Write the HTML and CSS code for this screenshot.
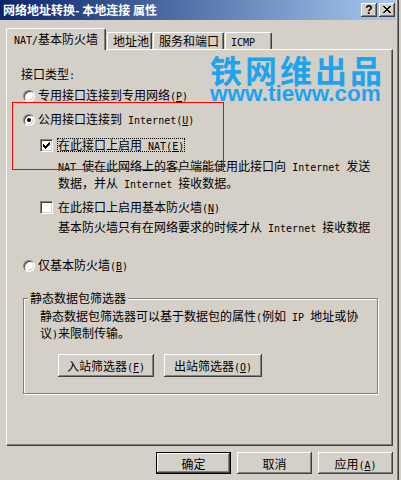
FILE: index.html
```html
<!DOCTYPE html>
<html lang="zh-CN">

<head>
    <meta charset="UTF-8">
    <meta name="viewport" content="width=device-width, initial-scale=1.0">
    <title>网络地址转换- 本地连接 属性</title>
    <link rel="stylesheet" href="styles.css">
</head>

<body>
    <div class="dlg">
        <div class="dlg__title">
            <span class="dlg__caption">网络地址转换- 本地连接 属性</span>
            <div class="dlg__sysbtns">
                <span class="sysbtn sysbtn--help">?</span>
                <span class="sysbtn">
                    <svg width="16" height="14" viewBox="0 0 16 14">
                        <path d="M4 3h2v1h-2z M10 3h2v1h-2z M5 4h2v1h-2z M9 4h2v1h-2z M6 5h2v1h-2z M8 5h2v1h-2z M7 6h2v1h-2z M8 7h2v1h-2z M6 7h2v1h-2z M9 8h2v1h-2z M5 8h2v1h-2z M10 9h2v1h-2z M4 9h2v1h-2z" fill="#000" />
                    </svg>
                </span>
            </div>
        </div>

        <div class="dlg__body">
            <div class="tabs">
                <div class="tab tab--active tab--nat"><span class="en">NAT/</span>基本防火墙</div>
                <div class="tab tab--pool">地址池</div>
                <div class="tab tab--svc">服务和端口</div>
                <div class="tab tab--icmp"><span class="en">ICMP</span></div>
            </div>

            <div class="panel">
                <div class="field-label">接口类型<span class="en">:</span></div>

                <div class="opt opt--private">
                    <span class="radio"></span>
                    <span>专用接口连接到专用网络<span class="en">(<u>P</u>)</span></span>
                </div>
                <div class="opt opt--public">
                    <span class="radio radio--on"></span>
                    <span>公用接口连接到<span class="en"> Internet(<u>U</u>)</span></span>
                </div>
                <div class="opt opt--sub opt--nat">
                    <span class="check">
                        <svg width="11" height="11" viewBox="0 0 11 11">
                            <path d="M8 2h1v1h-1z M7 3h2v1h-2z M2 4h1v1h-1z M6 4h3v1h-3z M2 5h2v1h-2z M5 5h3v1h-3z M2 6h5v1h-5z M3 7h3v1h-3z M4 8h1v1h-1z" fill="#000" />
                        </svg>
                    </span>
                    <span class="focus">在此接口上启用<span class="en"> NAT(<u>E</u>)</span></span>
                </div>
                <div class="hint hint--nat">
                    <span class="en">NAT </span>使在此网络上的客户端能使用此接口向<span class="en"> Internet </span>发送<br>
                    数据，并从<span class="en"> Internet </span>接收数据。
                </div>
                <div class="opt opt--sub opt--fw">
                    <span class="check"></span>
                    <span class="focus focus--off">在此接口上启用基本防火墙<span class="en">(<u>N</u>)</span></span>
                </div>
                <div class="hint hint--fw">
                    基本防火墙只有在网络要求的时候才从<span class="en"> Internet </span>接收数据
                </div>

                <div class="opt opt--basic">
                    <span class="radio"></span>
                    <span>仅基本防火墙<span class="en">(<u>B</u>)</span></span>
                </div>

                <div class="group">
                    <span class="group__legend">静态数据包筛选器</span>
                    <div class="group__text">
                        静态数据包筛选器可以基于数据包的属性<span class="en">(</span>例如<span class="en"> IP </span>地址或协<br>
                        议<span class="en">)</span>来限制传输。
                    </div>
                    <div class="group__btns">
                        <button class="btn btn--in">入站筛选器<span class="en">(<u>F</u>)</span></button>
                        <button class="btn btn--out">出站筛选器<span class="en">(<u>O</u>)</span></button>
                    </div>
                </div>
            </div>

            <div class="dlg__actions">
                <button class="btn btn--dlg btn--default">确定</button>
                <button class="btn btn--dlg">取消</button>
                <button class="btn btn--dlg">应用<span class="en">(<u>A</u>)</span></button>
            </div>
        </div>

        <div class="mark">
            <div class="mark__cn">铁网维出品</div>
            <div class="mark__en">www.tieww.com</div>
        </div>
        <div class="redbox"></div>
    </div>
</body>

</html>
```

FILE: styles.css
```css
* {
    box-sizing: border-box;
    margin: 0;
    padding: 0;
}

body {
    width: 401px;
    height: 480px;
    overflow: hidden;
    background-color: #d4d0c8;
    font: 12px "Noto Sans CJK SC", "DejaVu Sans", sans-serif;
    color: #000;
}

.en {
    font-family: "DejaVu Sans Mono", monospace;
    font-size: 10px;
}

/* window frame */
.dlg {
    position: relative;
    width: 399px;
    height: 480px;
    padding-right: 2px;
    border-right: 1px solid #404040;
    box-shadow: inset -1px 0 #808080;
}

.dlg__title {
    display: flex;
    align-items: center;
    justify-content: space-between;
    height: 20px;
    padding: 0 1px 0 3px;
    background: linear-gradient(to right, #0a246a, #a6caf0);
}

.dlg__caption {
    color: #fff;
    font-weight: bold;
    line-height: 20px;
    white-space: pre;
}

.dlg__sysbtns {
    display: flex;
    gap: 2px;
}

.sysbtn {
    display: flex;
    align-items: center;
    justify-content: center;
    width: 16px;
    height: 14px;
    background-color: #d4d0c8;
    box-shadow: inset -1px -1px #404040, inset 1px 1px #fff, inset -2px -2px #808080;
}

.sysbtn--help {
    font: bold 12px/14px "Liberation Sans", sans-serif;
}

.sysbtn svg {
    display: block;
}

.dlg__body {
    width: 393px;
    padding-left: 6px;
}

/* tabs */
.tabs {
    display: flex;
    align-items: flex-end;
    margin-top: 8px;
}

.tab {
    position: relative;
    height: 17px;
    margin-left: 1px;
    padding-left: 5px;
    line-height: 15px;
    white-space: nowrap;
    background-color: #d4d0c8;
    border-top: 1px solid #fff;
    border-left: 1px solid #fff;
    border-right: 1px solid #404040;
    border-radius: 2px 2px 0 0;
    box-shadow: inset -1px 0 #808080;
}

.tab--active {
    z-index: 1;
    height: 22px;
    margin: 0 0 -1px;
    padding: 2px 0 0 7px;
}

.tab--nat {
    width: 100px;
}

.tab--pool {
    width: 45px;
}

.tab--svc {
    width: 71px;
}

.tab--icmp {
    width: 47px;
}

/* page */
.panel {
    height: 397px;
    padding-left: 14px;
    border-top: 1px solid #fff;
    border-left: 1px solid #fff;
    border-right: 1px solid #404040;
    border-bottom: 1px solid #404040;
    box-shadow: inset -1px -1px #808080;
}

.field-label {
    height: 16px;
    margin-top: 16px;
    line-height: 16px;
}

.opt {
    display: flex;
    align-items: center;
    height: 16px;
    line-height: 16px;
    white-space: nowrap;
}

.opt--private {
    margin-top: 6px;
}

.opt--public {
    margin-top: 8px;
}

.opt--sub {
    padding-left: 19px;
}

.opt--nat {
    margin-top: 9px;
}

.opt--fw {
    margin-top: 7px;
}

.opt--basic {
    margin-top: 22px;
}

.radio {
    display: flex;
    align-items: center;
    justify-content: center;
    flex-shrink: 0;
    width: 12px;
    height: 12px;
    margin: 0 3px 0 2px;
    border: 1px solid;
    border-color: #808080 #fff #fff #808080;
    border-radius: 50%;
    background-color: #fff;
    box-shadow: inset 1px 1px #404040, inset -1px -1px #d4d0c8;
}

.radio--on::after {
    content: "";
    width: 4px;
    height: 4px;
    border-radius: 50%;
    background-color: #000;
}

.check {
    flex-shrink: 0;
    width: 13px;
    height: 13px;
    margin-right: 4px;
    border: 1px solid;
    border-color: #808080 #fff #fff #808080;
    background-color: #fff;
    box-shadow: inset 1px 1px #404040, inset -1px -1px #d4d0c8;
}

.check svg {
    display: block;
}

.focus {
    display: inline-block;
    height: 14px;
    line-height: 12px;
    border: 1px dotted #000;
}

.focus--off {
    border-color: transparent;
}

.hint {
    padding-left: 37px;
    line-height: 15px;
    white-space: nowrap;
}

.hint--nat {
    margin-top: 5px;
}

.hint--fw {
    margin-top: 4px;
}

/* group box */
.group {
    position: relative;
    width: 355px;
    margin: 24px 0 0 2px;
    padding: 9px 0 16px 16px;
    border: 1px solid #808080;
    box-shadow: 1px 1px #fff, inset 1px 1px #fff;
}

.group__legend {
    position: absolute;
    top: -8px;
    left: 4px;
    padding: 0 2px;
    line-height: 14px;
    background-color: #d4d0c8;
}

.group__text {
    line-height: 15px;
    white-space: nowrap;
}

.group__btns {
    display: flex;
    gap: 10px;
    margin: 12px 0 0 18px;
}

/* buttons */
.btn {
    height: 23px;
    padding: 0;
    border: 0;
    font: inherit;
    color: #000;
    white-space: nowrap;
    background-color: #d4d0c8;
    box-shadow: inset -1px -1px #404040, inset 1px 1px #fff, inset -2px -2px #808080;
}

.btn--in {
    width: 96px;
}

.btn--out {
    width: 98px;
}

.btn--dlg {
    width: 75px;
    height: 22px;
}

.btn--default {
    box-shadow: inset 0 0 0 1px #000, inset -2px -2px #404040, inset 2px 2px #fff, inset -3px -3px #808080;
}

.dlg__actions {
    display: flex;
    justify-content: flex-end;
    gap: 6px;
    margin-top: 6px;
}

/* overlays */
.mark {
    position: absolute;
    top: 54px;
    left: 210px;
    color: #1fa3ef;
}

.mark__cn {
    font: bold 32px/30px "Noto Sans CJK SC", sans-serif;
    letter-spacing: 3px;
}

.mark__en {
    font: bold 22.5px/20px "Liberation Sans", sans-serif;
}

.redbox {
    position: absolute;
    top: 102px;
    left: 12px;
    width: 212px;
    height: 68px;
    border: 1px solid #f00;
}
```
